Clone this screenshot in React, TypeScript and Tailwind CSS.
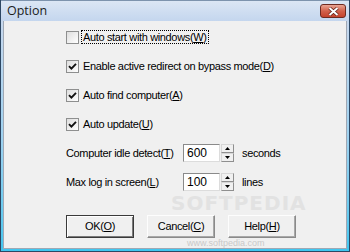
import React from "react";

const ui = "font-['Liberation_Sans',Arial,sans-serif] text-[11px] tracking-[-0.35px] text-black";

// accelerator label: "Text(K)" with K underlined
function Acc({ text, k }: { text: string; k: string }) {
  return (
    <span>
      {text}(<span className="underline underline-offset-[1px]">{k}</span>)
    </span>
  );
}

function CheckBox({ checked }: { checked: boolean }) {
  return (
    <span className="w-[13px] h-[13px] shrink-0 border border-[#8e8f8f] bg-gradient-to-br from-[#dedede] to-white flex items-center justify-center">
      {checked && (
        <svg width="9" height="9" viewBox="0 0 9 9">
          <path d="M1 4.2 L3.4 6.6 L8 1.8" fill="none" stroke="#111" strokeWidth="1.9" />
        </svg>
      )}
    </span>
  );
}

function Arrow({ up }: { up: boolean }) {
  return (
    <svg width="5" height="3" viewBox="0 0 5 3">
      <path d={up ? "M2.5 0 L5 3 L0 3 Z" : "M0 0 L5 0 L2.5 3 Z"} fill="#000" />
    </svg>
  );
}

function Spin({ value }: { value: string }) {
  return (
    <div className="flex items-stretch h-[18px] gap-[1px]">
      <div className="w-[37px] bg-white border border-[#8a8a8a] border-r-[#dcdcdc] border-b-[#dcdcdc] flex items-center pl-[3px] text-[12px] tracking-normal">
        {value}
      </div>
      <div className="w-[13px] flex flex-col">
        <div className="flex-1 bg-[#f0f0f0] border border-[#d6d6d6] border-r-[#8f8f8f] border-b-[#8f8f8f] flex items-center justify-center">
          <Arrow up />
        </div>
        <div className="flex-1 bg-[#f0f0f0] border border-[#d6d6d6] border-r-[#8f8f8f] border-b-[#8f8f8f] flex items-center justify-center">
          <Arrow up={false} />
        </div>
      </div>
    </div>
  );
}

function Btn({ text, k, def }: { text: string; k: string; def?: boolean }) {
  return (
    <div
      className={
        "w-[68px] h-[23px] bg-[#f0f0f0] flex items-center justify-center " +
        (def
          ? "border border-[#3a3a3a] shadow-[inset_1px_1px_0_#ffffff,inset_-1px_-1px_0_#7a7a7a]"
          : "border border-[#8a8a8a] border-t-[#fdfdfd] border-l-[#fdfdfd] shadow-[inset_-1px_-1px_0_#a8a8a8]")
      }
    >
      <Acc text={text} k={k} />
    </div>
  );
}

export default function App() {
  return (
    <div className={"relative w-[350px] h-[252px] flex flex-col overflow-hidden border-l border-b border-r border-[#2d4763] " + ui}>
      {/* title bar */}
      <div className="h-[21px] shrink-0 bg-gradient-to-b from-[#dbe6f4] to-[#c4d6ee] border-t border-[#7d93ad] flex items-center justify-between pl-[6px] pr-[3px]">
        <span className="font-['Open_Sans',sans-serif] text-[12.5px] tracking-normal text-[#1c1c1c]">Option</span>
        <div className="w-[26px] h-[14px] rounded-[3px] border border-[#6e2a20] bg-gradient-to-b from-[#e9a594] via-[#d2614b] to-[#c5432d] flex items-center justify-center">
          <svg width="11" height="9" viewBox="0 0 11 9">
            <path d="M1.5 1 L9.5 8 M9.5 1 L1.5 8" stroke="#5b1d15" strokeWidth="3.4" />
            <path d="M1.5 1 L9.5 8 M9.5 1 L1.5 8" stroke="#fff" strokeWidth="2" />
          </svg>
        </div>
      </div>

      {/* frame + client area */}
      <div className="flex-1 flex bg-gradient-to-b from-[#c6d8ee] via-[#9fd2f0] to-[#3fc6ef] pl-[2px] pr-[2px] pb-[2px]">
        <div className="flex-1 bg-[#f0f0f0] border border-t-0 border-[#a0a8b4] pl-[62px] pt-[7px] flex flex-col">
          <div className="flex flex-col gap-[11px]">
            <div className="h-[18px] flex items-center gap-[3px]">
              <CheckBox checked={false} />
              <span className="px-[1px] outline outline-1 outline-dotted outline-black leading-[12px]">
                <Acc text="Auto start with windows" k="W" />
              </span>
            </div>
            <div className="h-[18px] flex items-center gap-[4px]">
              <CheckBox checked />
              <Acc text="Enable active redirect on bypass mode" k="D" />
            </div>
            <div className="h-[18px] flex items-center gap-[4px]">
              <CheckBox checked />
              <Acc text="Auto find computer" k="A" />
            </div>
            <div className="h-[18px] flex items-center gap-[4px]">
              <CheckBox checked />
              <Acc text="Auto update" k="U" />
            </div>
            <div className="h-[18px] flex items-center">
              <span className="w-[117px]">
                <Acc text="Computer idle detect" k="T" />
              </span>
              <Spin value="600" />
              <span className="ml-[8px]">seconds</span>
            </div>
            <div className="h-[18px] flex items-center">
              <span className="w-[117px]">
                <Acc text="Max log in screen" k="L" />
              </span>
              <Spin value="100" />
              <span className="ml-[8px]">lines</span>
            </div>
          </div>

          <div className="mt-[24px] flex gap-[13px]">
            <Btn text="OK" k="O" def />
            <Btn text="Cancel" k="C" />
            <Btn text="Help" k="H" />
          </div>
        </div>
      </div>

      {/* watermark */}
      <div className="absolute left-[170px] top-[193px] leading-[20px] pointer-events-none text-[20px] font-bold tracking-[1px] text-[#e2e2e2] font-['DejaVu_Sans',sans-serif]">
        SOFTPEDIA
      </div>
      <div className="absolute left-[186px] top-[238px] leading-[10px] pointer-events-none text-[9px] tracking-normal text-[#c8c8c8]">
        www.softpedia.com
      </div>
    </div>
  );
}
